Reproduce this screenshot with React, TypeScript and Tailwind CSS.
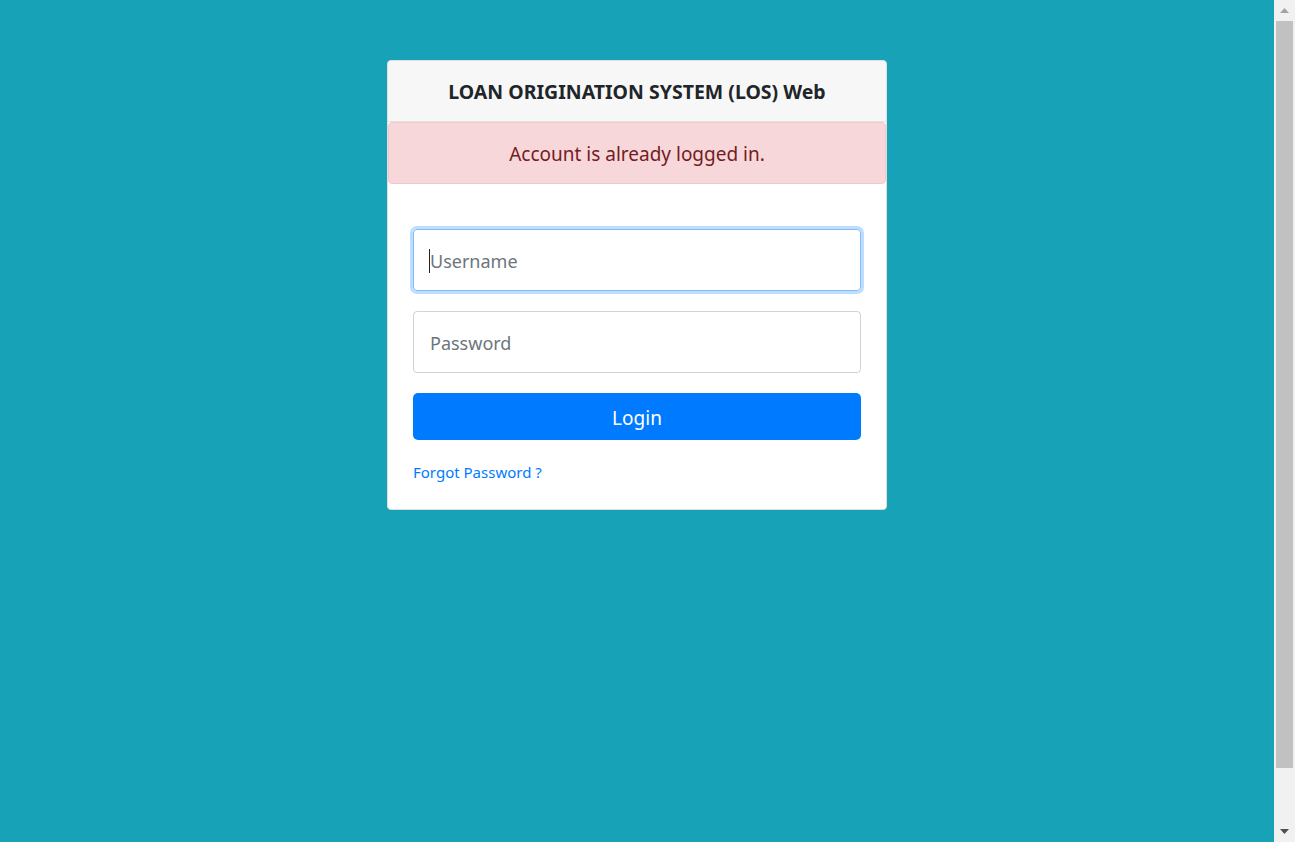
import { useState } from "react";

export default function App() {
  const [username, setUsername] = useState("");
  const [password, setPassword] = useState("");

  return (
    <div className="flex h-screen w-full overflow-hidden bg-[#17a2b8] font-['Noto_Sans',sans-serif]">
      {/* Page */}
      <div className="flex flex-1 justify-center pt-[60px]">
        <div className="flex h-[450px] w-[500px] flex-col rounded-[4px] border border-[#dfdfdf] bg-white">
          {/* Header */}
          <div className="flex h-[61px] items-center justify-center rounded-t-[4px] border-b border-[#e3e3e3] bg-[#f7f7f7] pt-[1px]">
            <h1 className="text-[19.5px] font-bold text-[#212529]">LOAN ORIGINATION SYSTEM (LOS) Web</h1>
          </div>

          {/* Alert */}
          <div className="flex h-[62px] items-center justify-center rounded-[4px] border border-[#f5c6cb] bg-[#f8d7da] pt-[2px]">
            <p className="text-[19px] text-[#721c24]">Account is already logged in.</p>
          </div>

          {/* Body */}
          <div className="flex flex-col px-[25px] pt-[45px]">
            <div className="relative">
              <input
                value={username}
                onChange={(e) => setUsername(e.target.value)}
                placeholder="Username"
                className="h-[62px] w-full rounded-[4px] border border-[#80bdff] px-[16px] pt-[2px] text-[18px] text-[#495057] shadow-[0_0_0_3px_rgba(0,123,255,0.25)] outline-none placeholder:text-[#6c757d]"
              />
              <span className="pointer-events-none absolute left-[16px] top-[20px] h-[24px] w-px bg-[#222]" />
            </div>
            <input
              type="password"
              value={password}
              onChange={(e) => setPassword(e.target.value)}
              placeholder="Password"
              className="mt-[20px] h-[62px] w-full rounded-[4px] border border-[#ced4da] px-[16px] pt-[2px] text-[18px] text-[#495057] outline-none placeholder:text-[#6c757d]"
            />
            <button className="mt-[20px] h-[47px] w-full rounded-[5px] bg-[#007bff] pt-[3px] text-[19px] text-white">
              Login
            </button>
            <a href="#" className="mt-[21px] self-start text-[15px] text-[#007bff]">
              Forgot Password ?
            </a>
          </div>
        </div>
      </div>

      {/* Scrollbar */}
      <div className="flex w-[21px] flex-col items-center bg-[#f1f1f1]">
        <div className="flex h-[21px] w-full items-center justify-center">
          <svg width="9" height="5" viewBox="0 0 9 5">
            <path d="M0 5 L4.5 0 L9 5 Z" fill="#a3a3a3" />
          </svg>
        </div>
        <div className="h-[747px] w-[17px] bg-[#c1c1c1]" />
        <div className="flex-1" />
        <div className="flex h-[21px] w-full items-center justify-center">
          <svg width="9" height="5" viewBox="0 0 9 5">
            <path d="M0 0 L9 0 L4.5 5 Z" fill="#505050" />
          </svg>
        </div>
      </div>
    </div>
  );
}
